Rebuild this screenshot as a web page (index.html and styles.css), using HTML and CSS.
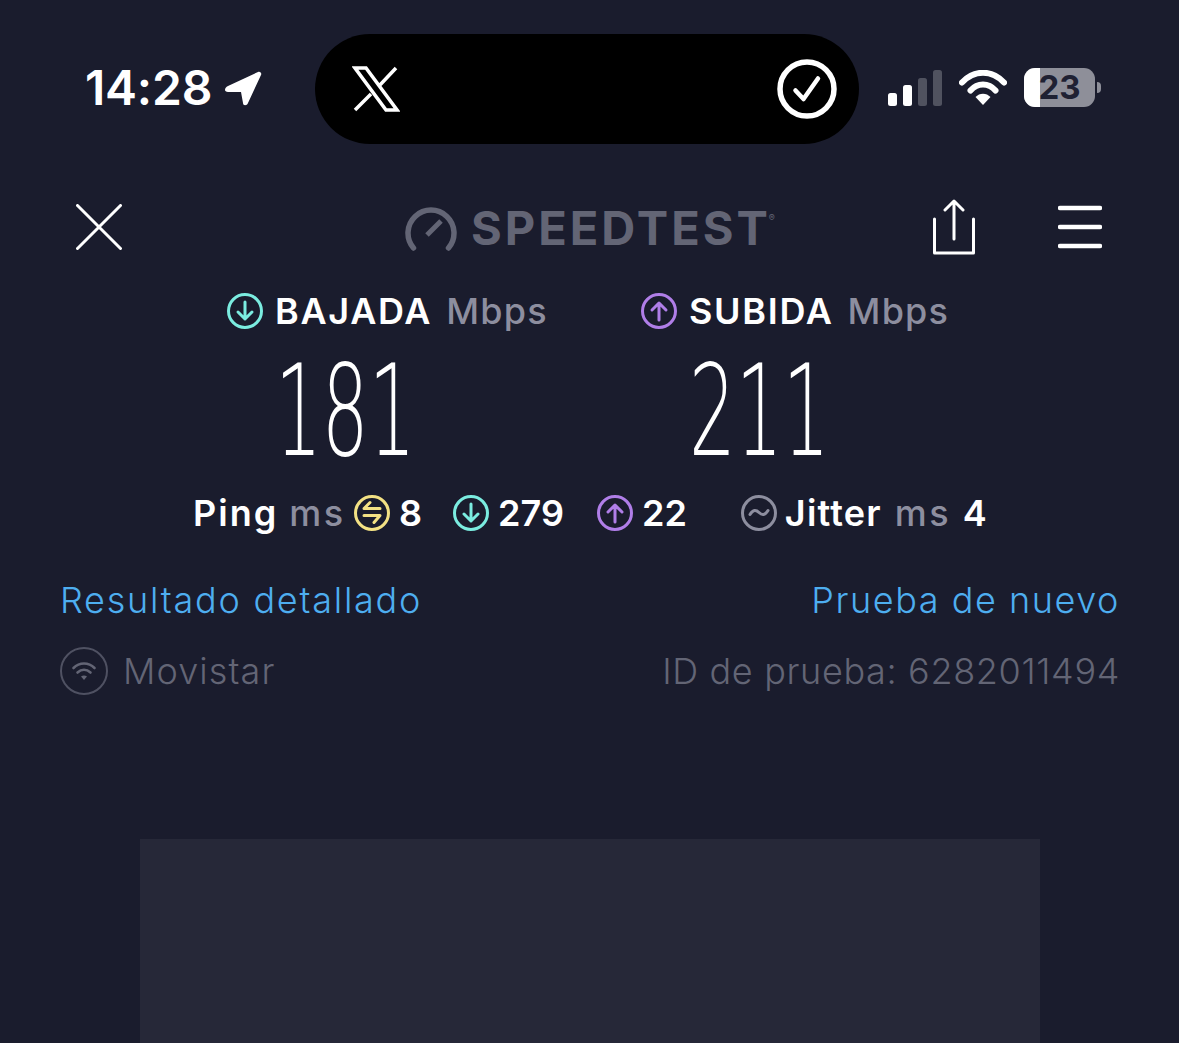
FILE: index.html
```html
<!DOCTYPE html>
<html lang="es">
<head>
<meta charset="utf-8">
<title>Speedtest</title>
<link rel="stylesheet" href="styles.css">
</head>
<body>
<div class="page">
  <header class="status">
    <div class="time-wrap">
      <span class="time">14:28</span>
      <svg class="loc" viewBox="0 0 38 38"><path d="M3 17 33 3c2-1 4 1 3 3L23 34c-1 3-5 3-5 0l-2-11H3c-4 0-4-4 0-6z" fill="#fff"/></svg>
    </div>
    <div class="island">
      <svg class="x-logo" viewBox="0 0 48 46"><path d="M3 2h11l31 42H34zM44 2 27 20M19 28 3 44" fill="none" stroke="#fff" stroke-width="3.500"/></svg>
      <svg class="check" viewBox="0 0 60 60"><circle cx="30" cy="30" r="27" fill="none" stroke="#fff" stroke-width="5.500"/><path d="M18.500 31.500 26.500 40 41 19.500" fill="none" stroke="#fff" stroke-width="4.500" stroke-linecap="round" stroke-linejoin="round"/></svg>
    </div>
    <div class="indicators">
      <svg class="signal" viewBox="0 0 54 36"><rect x="0" y="23" width="9" height="13" rx="2.500" fill="#fff"/><rect x="15" y="15" width="9" height="21" rx="2.500" fill="#fff"/><rect x="30" y="8" width="9" height="28" rx="2.500" fill="#50525f"/><rect x="45" y="0" width="9" height="36" rx="2.500" fill="#50525f"/></svg>
      <svg class="wifi" viewBox="0 0 48 36"><path d="M3 12.500C15-.5 33-.5 45 12.500" fill="none" stroke="#fff" stroke-width="6" stroke-linecap="round"/><path d="M11.500 20.500C18.500 12.500 29.500 12.500 36.500 20.500" fill="none" stroke="#fff" stroke-width="6" stroke-linecap="round"/><path d="M16.500 27c4-4.500 11-4.500 15 0L24 35z" fill="#fff"/></svg>
      <div class="battery"><div class="battery-body"><div class="battery-fill"></div><span class="battery-num">23</span></div><span class="battery-tip"></span></div>
    </div>
  </header>

  <nav class="nav">
    <svg class="close" viewBox="0 0 46 46"><path d="M1.500 1.500l43 43M44.500 1.500l-43 43" stroke="#fff" stroke-width="3" stroke-linecap="round"/></svg>
    <div class="brand">
      <svg class="gauge" viewBox="0 0 52 44"><path d="M8.500 41A23 23 0 1 1 43.500 41" fill="none" stroke="#636575" stroke-width="5.500" stroke-linecap="round"/><path d="M22 28 36 14" fill="none" stroke="#636575" stroke-width="5"/></svg>
      <span class="brand-name">SPEEDTEST</span><span class="brand-mark">®</span>
    </div>
    <div class="nav-actions">
      <svg class="share" viewBox="0 0 44 56"><path d="M3.500 20v34h39V20M23 40V3M14 11l9-9 9 9" fill="none" stroke="#fff" stroke-width="3" stroke-linecap="round" stroke-linejoin="round"/></svg>
      <svg class="menu" viewBox="0 0 44 44"><path d="M2 3h40M2 22h40M2 41h40" stroke="#fff" stroke-width="4.500" stroke-linecap="round"/></svg>
    </div>
  </nav>

  <section class="speeds">
    <div class="speed speed-down">
      <div class="speed-head">
        <svg class="ring ring-down" viewBox="0 0 36 36"><circle cx="18" cy="18" r="16.500"/><path d="M18 9v17M11 19l7 7 7-7"/></svg>
        <span class="label">BAJADA</span><span class="unit">Mbps</span>
      </div>
      <div class="value"><span class="value-num">181</span></div>
    </div>
    <div class="speed speed-up">
      <div class="speed-head">
        <svg class="ring ring-up" viewBox="0 0 36 36"><circle cx="18" cy="18" r="16.500"/><path d="M18 27V10M11 17l7-7 7 7"/></svg>
        <span class="label">SUBIDA</span><span class="unit">Mbps</span>
      </div>
      <div class="value"><span class="value-num">211</span></div>
    </div>
  </section>

  <section class="stats">
    <span class="stat-label stat-ping">Ping</span><span class="stat-unit">ms</span>
    <svg class="ring ring-ping" viewBox="0 0 36 36"><circle cx="18" cy="18" r="16.500"/><path d="M26 13.500H10l6-6M10 20.500h16l-6 7"/></svg>
    <span class="stat-num stat-gap-a">8</span>
    <svg class="ring ring-down stat-icon-b" viewBox="0 0 36 36"><circle cx="18" cy="18" r="16.500"/><path d="M18 9v17M11 19l7 7 7-7"/></svg>
    <span class="stat-num">279</span>
    <svg class="ring ring-up stat-icon-c" viewBox="0 0 36 36"><circle cx="18" cy="18" r="16.500"/><path d="M18 27V10M11 17l7-7 7 7"/></svg>
    <span class="stat-num">22</span>
    <svg class="ring ring-jitter stat-icon-d" viewBox="0 0 36 36"><circle cx="18" cy="18" r="16.500"/><path d="M9 19.500c3-5 6-5 9-2s6 3 9-2"/></svg>
    <span class="stat-label">Jitter</span><span class="stat-unit stat-unit-last">ms</span><span class="stat-num stat-last">4</span>
  </section>

  <section class="links">
    <span class="link link-long">Resultado detallado</span>
    <span class="link">Prueba de nuevo</span>
  </section>

  <section class="meta">
    <div class="isp">
      <svg class="isp-icon" viewBox="0 0 48 48"><circle cx="24" cy="24" r="23" fill="none" stroke="#4f5162" stroke-width="2"/><path d="M13.500 21c6-6 15-6 21 0M17.500 25.500c4-3.500 9-3.500 13 0" fill="none" stroke="#636575" stroke-width="2.600" stroke-linecap="round"/><path d="M21 29.500c2-1.500 4-1.500 6 0L24 33z" fill="#636575"/></svg>
      <span class="isp-name">Movistar</span>
    </div>
    <span class="test-id">ID de prueba: 6282011494</span>
  </section>

  <div class="ad"></div>
</div>
</body>
</html>
```
FILE: styles.css
```css
* { box-sizing: border-box; }
html, body { margin: 0; height: 100%; overflow: hidden; background: #1a1c2d; }
body { font-family: "Inter", "Open Sans", sans-serif; color: #fff; }
.page { width: 1179px; height: 1043px; overflow: hidden; display: flex; flex-direction: column; }

.status { display: flex; align-items: center; height: 110px; margin-top: 34px; padding-left: 85px; }
.time-wrap { display: flex; align-items: center; width: 230px; gap: 14px; margin-top: -3px; }
.time { font-size: 48px; font-weight: 600; letter-spacing: -.2px; line-height: 1; width: 126px; }
.loc { width: 38px; height: 38px; }
.island { width: 544px; height: 110px; border-radius: 55px; background: #000; display: flex; align-items: center; justify-content: space-between; padding: 0 22px 0 37px; }
.x-logo { width: 48px; height: 46px; }
.check { width: 60px; height: 60px; }
.indicators { display: flex; align-items: center; padding-left: 29px; height: 110px; }
.signal { width: 54px; height: 36px; margin-top: -3px; }
.wifi { width: 48px; height: 36px; margin-left: 17px; margin-top: -3px; }
.battery { display: flex; align-items: center; margin-left: 17px; margin-top: -3px; }
.battery-body { position: relative; width: 71px; height: 39px; border-radius: 11px; background: #8e8f99; overflow: hidden; display: flex; align-items: center; justify-content: center; }
.battery-fill { position: absolute; left: 0; top: 0; bottom: 0; width: 16px; background: #fff; }
.battery-num { position: relative; font-size: 33px; font-weight: 700; color: #1f2133; line-height: 1; }
.battery-tip { width: 4px; height: 11px; margin-left: 2px; background: #8e8f99; border-radius: 0 5px 5px 0; }

.nav { display: flex; align-items: center; height: 56px; margin-top: 55px; padding: 0 77px 0 76px; }
.close { width: 46px; height: 46px; }
.brand { display: flex; align-items: center; margin-left: 283px; }
.gauge { width: 52px; height: 44px; margin-top: 3px; }
.brand-name { font-size: 47px; font-weight: 700; color: #636575; margin-left: 14px; letter-spacing: 3px; line-height: 1; }
.brand-mark { font-size: 9px; color: #636575; align-self: flex-start; margin-top: 8px; margin-left: -2px; }
.nav-actions { display: flex; align-items: center; gap: 83px; margin-left: auto; }
.share { width: 44px; height: 56px; }
.menu { width: 44px; height: 44px; }

.ring { width: 36px; height: 36px; flex: none; fill: none; stroke-width: 3; stroke-linecap: round; stroke-linejoin: round; }
.ring-down { stroke: #7bece0; }
.ring-up { stroke: #b07ee8; }
.ring-ping { stroke: #f3e184; }
.ring-jitter { stroke: #8d8e9f; }

.speeds { display: flex; margin-top: 29px; padding-left: 227px; }
.speed { display: flex; flex-direction: column; }
.speed-down { width: 414px; }
.speed-head { display: flex; align-items: center; height: 54px; }
.label { font-size: 36px; font-weight: 600; margin-left: 12px; letter-spacing: 1.7px; line-height: 1; }
.unit { font-size: 36px; font-weight: 500; color: #8d8e9f; margin-left: 14px; letter-spacing: 1.200px; line-height: 1; }
.value { height: 140px; padding-left: 48px; }
.value-num { display: block; width: 150px; font-family: "DejaVu Sans", sans-serif; font-weight: 200; font-size: 127px; line-height: 146px; transform: scaleX(.58); transform-origin: left center; }

.stats { display: flex; align-items: center; height: 54px; margin-top: 8px; padding-left: 193px; }
.stat-label { font-size: 36px; font-weight: 600; letter-spacing: 1.200px; line-height: 1; }
.stat-ping { letter-spacing: 2px; }
.stat-unit { font-size: 36px; font-weight: 500; color: #8d8e9f; letter-spacing: 2.500px; margin: 0 8.500px 0 11px; line-height: 1; }
.stat-unit-last { margin-left: 13px; }
.stat-num { font-size: 36px; font-weight: 600; margin-left: 9px; line-height: 1; }
.stat-icon-b { margin-left: 31px; }
.stat-icon-c { margin-left: 33px; }
.stat-icon-d { margin-left: 54px; margin-right: 8px; }
.stat-last { margin-left: 3px; }

.links { display: flex; justify-content: space-between; padding: 0 59px 0 60px; margin-top: 33px; height: 54px; align-items: center; }
.link { font-size: 36px; font-weight: 300; color: #4eaef0; letter-spacing: 1.550px; line-height: 1; }
.link-long { letter-spacing: 1.750px; }

.meta { display: flex; justify-content: space-between; align-items: center; padding: 0 59px 0 60px; margin-top: 17px; height: 54px; color: #636575; font-size: 36px; font-weight: 300; }
.isp { display: flex; align-items: center; gap: 15px; }
.isp-icon { width: 48px; height: 48px; }
.isp-name { letter-spacing: 1.100px; }
.test-id { letter-spacing: .650px; }

.ad { flex: none; width: 900px; height: 204px; margin: 141px 0 0 140px; background: #262838; }
```
